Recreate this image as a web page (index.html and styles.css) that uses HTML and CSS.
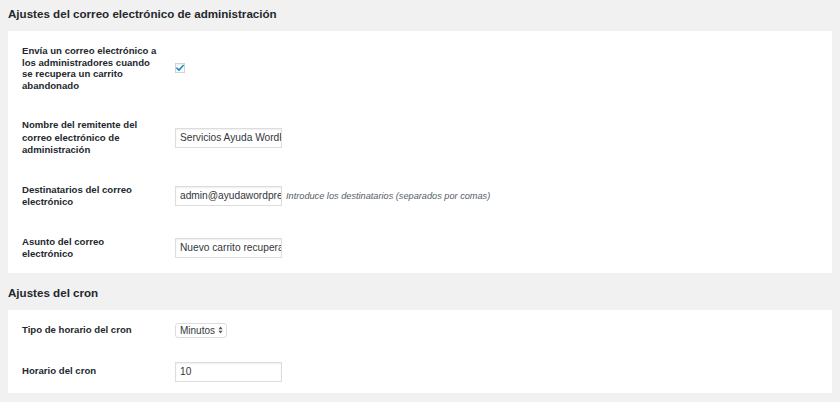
FILE: index.html
```html
<!DOCTYPE html>
<html lang="es">
<head>
<meta charset="utf-8">
<link rel="stylesheet" href="styles.css">
</head>
<body>
<h2 class="section-title">Ajustes del correo electrónico de administración</h2>
<div class="card">
  <div class="row row-first">
    <div class="label">Envía un correo electrónico a los administradores cuando se recupera un carrito abandonado</div>
    <div class="field">
      <span class="checkbox">
        <svg width="9" height="8" viewBox="0 0 9 8"><path d="M1 4.2 L3.4 6.4 L8 1.2" fill="none" stroke="#1e8cbe" stroke-width="1.8" stroke-linecap="round" stroke-linejoin="round"/></svg>
      </span>
    </div>
  </div>
  <div class="row">
    <div class="label">Nombre del remitente del correo electrónico de administración</div>
    <div class="field"><span class="input">Servicios Ayuda WordPress</span></div>
  </div>
  <div class="row">
    <div class="label">Destinatarios del correo electrónico</div>
    <div class="field"><span class="input">admin@ayudawordpress.com</span><span class="desc">Introduce los destinatarios (separados por comas)</span></div>
  </div>
  <div class="row row-end">
    <div class="label">Asunto del correo electrónico</div>
    <div class="field"><span class="input">Nuevo carrito recuperado</span></div>
  </div>
</div>
<h2 class="section-title section-second">Ajustes del cron</h2>
<div class="card">
  <div class="row row-cron">
    <div class="label">Tipo de horario del cron</div>
    <div class="field">
      <span class="select">Minutos
        <svg class="arrows" width="5" height="8" viewBox="0 0 5 8"><path d="M2.5 0.5 L4.6 3.2 L0.4 3.2 Z M2.5 7.5 L4.6 4.8 L0.4 4.8 Z" fill="#555"/></svg>
      </span>
    </div>
  </div>
  <div class="row row-last">
    <div class="label">Horario del cron</div>
    <div class="field"><span class="input">10</span></div>
  </div>
</div>
</body>
</html>
```

FILE: styles.css
```css
html, body {
  margin: 0;
  padding: 0;
  background: #f1f1f1;
}
body {
  padding: 0 8px;
  font-family: "Liberation Sans", Arial, sans-serif;
  color: #23282d;
}
.section-title {
  font-size: 11.6px;
  font-weight: bold;
  line-height: 14px;
  margin: 7px 0 10px;
  color: #23282d;
}
.section-second {
  margin-top: 13px;
}
.card {
  background: #fff;
  padding: 0 14px;
}
.row {
  display: flex;
  align-items: center;
  padding: 14px 0 13px;
}
.row-first {
  padding: 14px 0 14px;
}
.row-first .label {
  line-height: 11.5px;
}
.row-end {
  padding-bottom: 12px;
}
.row-cron {
  padding: 13px 0 12px;
}
.row-last {
  padding: 12px 0 11px;
}
.label {
  width: 135.5px;
  margin-right: 17.5px;
  font-size: 9.6px;
  font-weight: bold;
  line-height: 12.5px;
  color: #23282d;
  flex-shrink: 0;
}
.field {
  display: flex;
  align-items: center;
}
.checkbox {
  width: 10px;
  height: 10px;
  box-sizing: border-box;
  border: 1px solid #cfd3d6;
  box-shadow: inset 0 1px 2px rgba(0,0,0,0.08);
  background: #fff;
  display: flex;
  align-items: center;
  justify-content: center;
}
.checkbox svg {
  display: block;
  margin-top: -1px;
}
.input {
  display: block;
  width: 107px;
  height: 20px;
  box-sizing: border-box;
  border: 1px solid #ddd;
  box-shadow: inset 0 1px 2px rgba(0,0,0,0.07);
  padding: 0 4px;
  font-size: 10.2px;
  line-height: 18px;
  color: #32373c;
  white-space: nowrap;
  overflow: hidden;
}
.desc {
  margin-left: 4px;
  font-size: 9.2px;
  font-style: italic;
  color: #555d66;
}
.select {
  display: flex;
  align-items: center;
  height: 15px;
  box-sizing: border-box;
  border: 1px solid #ddd;
  border-radius: 3px;
  padding: 0 3px 0 4px;
  font-size: 10px;
  color: #32373c;
  background: #fff;
}
.select .arrows {
  margin-left: 3px;
}
```
